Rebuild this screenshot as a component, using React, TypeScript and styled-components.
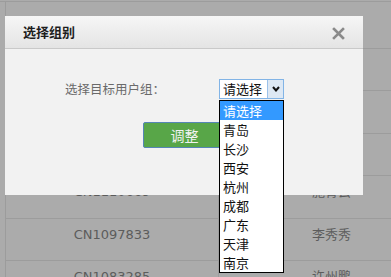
import React from "react";
import styled, { createGlobalStyle } from "styled-components";

const Global = createGlobalStyle`
  html, body { margin: 0; padding: 0; }
  body {
    background: #ababab;
    overflow: hidden;
    width: 391px;
    height: 277px;
    font-family: "Noto Sans CJK SC", sans-serif;
  }
`;

const Page = styled.div`
  position: relative;
  width: 391px;
  height: 277px;
  overflow: hidden;
  background: #ababab;
`;

const TopRule = styled.div`
  margin-top: 1px;
  height: 1px;
  background: #9c9c9c;
`;

const Table = styled.div`
  margin-left: 5px;
  width: 440px;
  border-left: 1px solid #9c9c9c;
  padding-top: 46px;
`;

const Row = styled.div`
  display: grid;
  grid-template-columns: 212px 226px;
  height: 41.4px;
  border-top: 1px solid #9c9c9c;
`;

const Cell = styled.div<{ $line?: boolean }>`
  padding-top: 6px;
  text-align: center;
  font: 13px/20px "DejaVu Sans", "Noto Sans CJK SC", sans-serif;
  color: #5c5c5c;
  border-left: ${(p) => (p.$line ? "1px solid #9c9c9c" : "none")};
`;

const Dialog = styled.div`
  position: absolute;
  left: 5px;
  top: 16px;
  width: 358px;
  height: 179px;
  background: #f2f2f2;
  display: flex;
  flex-direction: column;
`;

const Header = styled.div`
  height: 32px;
  border-bottom: 1px solid #c9c9c9;
  background: linear-gradient(#f6f6f6, #e4e4e4);
  display: flex;
  align-items: center;
  justify-content: space-between;
  padding: 0 18px 0 18px;
`;

const Title = styled.div`
  font: bold 13px/16px "Noto Sans CJK SC", sans-serif;
  color: #1e1e1e;
`;

const Close = styled.svg`
  width: 13px;
  height: 13px;
  margin-top: 2px;
`;

const Body = styled.div`
  padding: 30px 0 0 60px;
  display: flex;
  flex-direction: column;
  align-items: flex-start;
`;

const FieldRow = styled.div`
  display: flex;
  align-items: center;
  gap: 54px;
`;

const Label = styled.div`
  font: 12.5px/16px "Noto Sans CJK SC", sans-serif;
  color: #6a6a6a;
`;

const SelectWrap = styled.div`
  position: relative;
`;

const SelectBox = styled.div`
  width: 63px;
  height: 18px;
  border: 1px solid #82b4e6;
  background: #fff;
  display: flex;
  box-sizing: content-box;
`;

const SelectText = styled.div`
  flex: 1;
  padding-left: 3px;
  font: 13px/18px "Noto Sans CJK SC", sans-serif;
  color: #111;
`;

const ArrowBox = styled.div`
  width: 15px;
  border-left: 1px solid #9cc2ea;
  background: #dde8f4;
  display: flex;
  align-items: center;
  justify-content: center;
`;

const List = styled.div`
  position: absolute;
  left: 0;
  top: 21px;
  width: 63px;
  border: 1px solid #000;
  background: #fff;
  z-index: 2;
`;

const Option = styled.div<{ $active?: boolean }>`
  height: 19px;
  padding-left: 3px;
  font: 13px/19px "Noto Sans CJK SC", sans-serif;
  color: ${(p) => (p.$active ? "#fff" : "#111")};
  background: ${(p) => (p.$active ? "#3399ff" : "#fff")};
`;

const Button = styled.div`
  margin: 23px 0 0 78px;
  width: 81px;
  height: 24px;
  border: 1px solid #5586b5;
  border-radius: 2px;
  background: #58a648;
  color: #f2f2f2;
  font: 14px/24px "Noto Sans CJK SC", sans-serif;
  text-align: center;
`;

const rows = [
  ["CN1110669", "施青云"],
  ["CN1097833", "李秀秀"],
  ["CN1083285", "许州鹏"],
];

const cities = ["请选择", "青岛", "长沙", "西安", "杭州", "成都", "广东", "天津", "南京"];

export default function App() {
  return (
    <Page>
      <Global />
      <TopRule />
      <Table>
        <Row>
          <Cell />
          <Cell $line />
        </Row>
        <Row>
          <Cell />
          <Cell $line />
        </Row>
        <Row>
          <Cell />
          <Cell $line />
        </Row>
        {rows.map((r) => (
          <Row key={r[0]}>
            <Cell>{r[0]}</Cell>
            <Cell $line>{r[1]}</Cell>
          </Row>
        ))}
      </Table>
      <Dialog>
        <Header>
          <Title>选择组别</Title>
          <Close viewBox="0 0 13 13">
            <path d="M2 2 L11 11 M11 2 L2 11" stroke="#8a8a8a" strokeWidth="2.6" strokeLinecap="square" />
          </Close>
        </Header>
        <Body>
          <FieldRow>
            <Label>选择目标用户组：</Label>
            <SelectWrap>
              <SelectBox>
                <SelectText>请选择</SelectText>
                <ArrowBox>
                  <svg width="8" height="6" viewBox="0 0 8 6">
                    <path d="M1 1 L4 4.5 L7 1" stroke="#111" strokeWidth="2" fill="none" />
                  </svg>
                </ArrowBox>
              </SelectBox>
              <List>
                {cities.map((c, i) => (
                  <Option key={c} $active={i === 0}>
                    {c}
                  </Option>
                ))}
              </List>
            </SelectWrap>
          </FieldRow>
          <Button>调整</Button>
        </Body>
      </Dialog>
    </Page>
  );
}
